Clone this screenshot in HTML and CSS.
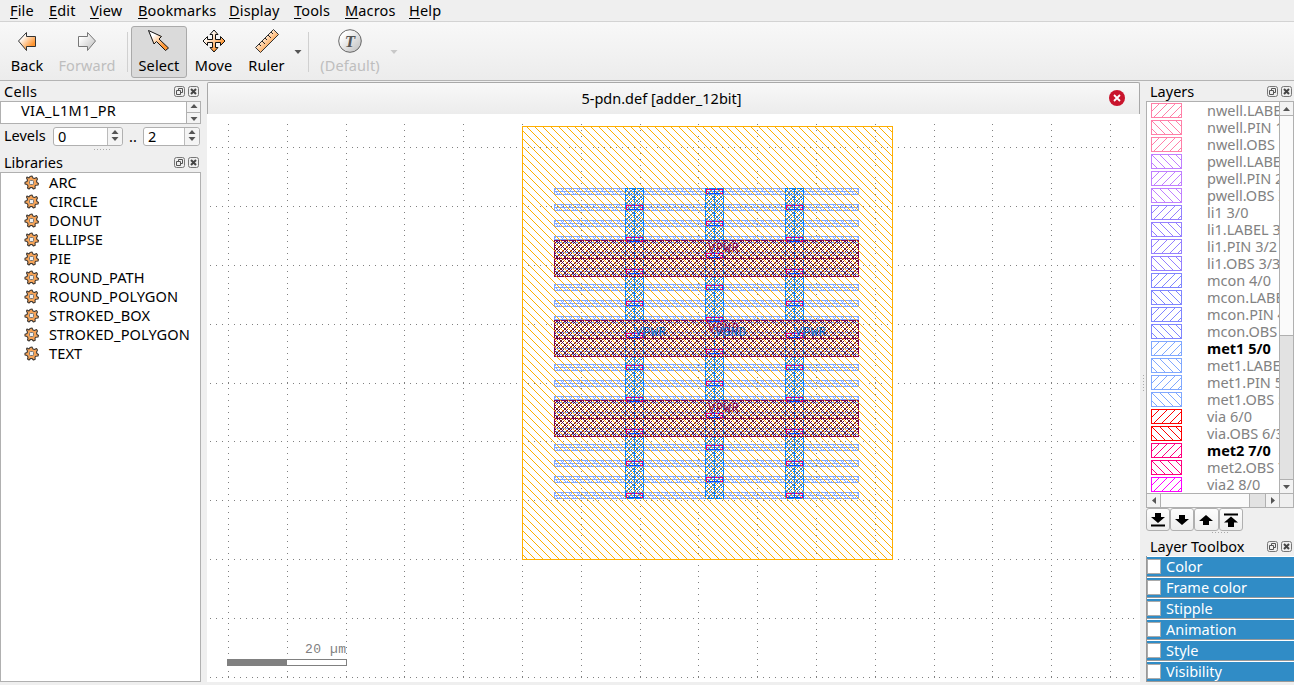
FILE: index.html
```html
<!DOCTYPE html>
<html lang="en">
<head>
<meta charset="utf-8">
<title>5-pdn.def [adder_12bit]</title>
<link rel="stylesheet" href="styles.css">
</head>
<body>
<svg class="defs" width="0" height="0">
  <defs>
    <linearGradient id="orange" x1="0" y1="0" x2="1" y2="1"><stop offset=".25" stop-color="#fff"/><stop offset=".75" stop-color="#ff9632"/></linearGradient>
    <linearGradient id="grey" x1="0" y1="0" x2="1" y2="1"><stop offset=".2" stop-color="#fff"/><stop offset="1" stop-color="#bbb"/></linearGradient>
    <symbol id="float" viewBox="0 0 11 11"><rect x=".5" y=".5" width="10" height="10" rx="2" fill="#eee" stroke="#777"/><path d="M4.5 4V2.5h4v4H7M2.500 4.500h4v4h-4z" fill="none" stroke="#555"/></symbol>
    <symbol id="close" viewBox="0 0 11 11"><rect x=".5" y=".5" width="10" height="10" rx="2" fill="#eee" stroke="#777"/><path d="M3 3l5 5M8 3L3 8" stroke="#444" stroke-width="2"/></symbol>
    <symbol id="gear" viewBox="0 0 15 15"><path d="M6 1.500l2-.5 1 2 1.500.5 2-1 1 1.500-1 2 .5 1.500 1.500 1-.5 1.500-2 .2-1 1 .2 2-1.700.8-1.500-1.500-1.500 0-1.500 1.500-1.500-1 .5-2-1-1.500-2-.5 0-1.800 2-.7.5-1.500-1-2L3 2l2 1z" fill="#f6a458" stroke="#403a35" stroke-width="1.100" stroke-linejoin="round"/><rect x="5.500" y="5.500" width="4" height="4" rx="1" fill="#eee" stroke="#777"/></symbol>
    <symbol id="up" viewBox="0 0 7 4"><path d="M0 4L3.500 0 7 4z"/></symbol>
    <symbol id="down" viewBox="0 0 7 4"><path d="M0 0h7L3.500 4z"/></symbol>
  </defs>
</svg>
<div class="app">
  <nav class="menubar">
    <span class="m-file"><u>F</u>ile</span><span class="m-edit"><u>E</u>dit</span><span class="m-view"><u>V</u>iew</span><span class="m-book"><u>B</u>ookmarks</span><span class="m-disp"><u>D</u>isplay</span><span class="m-tools"><u>T</u>ools</span><span class="m-macros"><u>M</u>acros</span><span class="m-help"><u>H</u>elp</span>
  </nav>
  <div class="toolbar">
    <button class="tool t-back"><svg width="24" height="24"><path d="M3.500 12L11.500 3.500v4h9v10h-9v4z" fill="url(#orange)" stroke="#333"/></svg><span>Back</span></button>
    <button class="tool t-forward off"><svg width="24" height="24"><path d="M20.500 12L12.500 3.500v4h-9v10h9v4z" fill="url(#grey)" stroke="#777"/></svg><span>Forward</span></button>
    <i class="sep s1"></i>
    <button class="tool t-select on"><svg width="24" height="24"><path d="M1.500 1.500L14.500 7.500 12 10 21.500 19 18.500 21.500 9.500 12.500 7 15z" fill="url(#orange)" stroke="#111"/></svg><span>Select</span></button>
    <button class="tool t-move"><svg width="24" height="24"><path d="M12 1L16 5.500H13.500V10.500H18.500V7.500L23 12 18.500 16.500V13.500H13.500V18.500H16L12 23 8 18.500H10.500V13.500H5.500V16.500L1 12 5.500 7.500V10.500H10.500V5.500H8z" fill="url(#orange)" stroke="#111"/></svg><span>Move</span></button>
    <button class="tool t-ruler"><svg width="24" height="24"><path d="M.5 18.500L18.500.5 23.500 5.500 5.500 23.500z" fill="url(#orange)" stroke="#333"/><path d="M4 15l2 2M7 12l3 3M10 9l2 2M13 6l3 3M16 3l2 2" stroke="#222"/></svg><span>Ruler</span></button>
    <svg class="drop" width="8" height="4"><use href="#down" fill="#555"/></svg>
    <i class="sep s2"></i>
    <button class="tool t-default off"><svg width="24" height="24"><circle cx="12" cy="12" r="11.300" fill="url(#grey)" stroke="#666"/><text x="12" y="17.500" text-anchor="middle" class="tee">T</text></svg><span>(Default)</span></button>
    <svg class="drop d2" width="8" height="4"><use href="#down" fill="#c8c8c8"/></svg>
  </div>
  <main class="work">
    <aside class="left">
      <div class="head"><b class="n-cells">Cells</b><svg><use href="#float"/></svg><svg><use href="#close"/></svg></div>
      <div class="cells"><span>VIA_L1M1_PR</span><div class="mini"><svg><use href="#up"/></svg><svg><use href="#down"/></svg></div></div>
      <div class="levels"><span class="lv">Levels</span>
        <div class="spin w1"><span>0</span><div><svg><use href="#up"/></svg><svg><use href="#down"/></svg></div></div>
        <span class="dots">..</span>
        <div class="spin w2"><span>2</span><div><svg><use href="#up"/></svg><svg><use href="#down"/></svg></div></div>
      </div>
      <div class="grip"></div>
      <div class="head lib"><b class="n-lib">Libraries</b><svg><use href="#float"/></svg><svg><use href="#close"/></svg></div>
      <ul class="libs" id="libs"></ul>
    </aside>
    <section class="center">
      <header class="tab"><span>5-pdn.def [adder_12bit]</span><svg width="16" height="16"><circle cx="8" cy="8" r="8" fill="#c9142c"/><path d="M5 5l6 6M11 5l-6 6" stroke="#fff" stroke-width="1.800"/></svg></header>
      <svg class="view" id="view" width="933" height="568" viewBox="207 114 933 568" shape-rendering="crispEdges"></svg>
    </section>
    <div class="handle"><i></i></div>
    <aside class="right">
      <div class="head"><b class="n-layers">Layers</b><svg><use href="#float"/></svg><svg><use href="#close"/></svg></div>
      <div class="layerbox">
        <div class="rows" id="rows"></div>
        <div class="vbar"><div class="sb"><svg width="7" height="4"><use href="#up"/></svg></div><div class="thumb"></div><div class="track"></div><div class="sb last"><svg width="7" height="4"><use href="#down"/></svg></div></div>
        <div class="hbar"><div class="hb"><svg width="4" height="7"><path d="M4 0v7L0 3.500z"/></svg></div><div class="hthumb"></div><div class="htrack"></div><div class="hb"><svg width="4" height="7"><path d="M0 0v7l4-3.500z"/></svg></div></div>
        <div class="corner"></div>
      </div>
      <div class="arrows">
        <button><svg width="14" height="14"><path d="M4 0h6v4h4L7 10 0 4h4zM0 11.500h14v2H0z"/></svg></button>
        <button><svg width="14" height="14"><path d="M4 2h6v4h4L7 12 0 6h4z"/></svg></button>
        <button><svg width="14" height="14"><path d="M7 2l7 6h-4v4H4V8H0z"/></svg></button>
        <button><svg width="14" height="14"><path d="M0 .5h14v2H0zM7 3.500l7 6h-4V14H4V9.500H0z"/></svg></button>
      </div>
      <div class="grip g2"></div>
      <div class="head tb"><b class="n-tb">Layer Toolbox</b><svg><use href="#float"/></svg><svg><use href="#close"/></svg></div>
      <div class="boxes"><label><i></i>Color</label><label><i></i>Frame color</label><label><i></i>Stipple</label><label><i></i>Animation</label><label><i></i>Style</label><label><i></i>Visibility</label></div>
    </aside>
  </main>
</div>
<script src="app.js"></script>
</body>
</html>
```

FILE: styles.css
```css
* { box-sizing: border-box; }
body { margin: 0; width: 1294px; height: 685px; overflow: hidden; background: #efefef; color: #000; font: 14.5px/20px "Noto Sans", "Open Sans", sans-serif; }
.defs { position: absolute; }
button { font: inherit; color: inherit; padding: 0; background: none; border: 0; }
.app { display: flex; flex-direction: column; height: 685px; }
.menubar { display: flex; height: 22px; padding-left: 10px; border-bottom: 1px solid #d3d3d3; white-space: nowrap; line-height: 21px; letter-spacing: .15px; }
.menubar span { flex: none; }
.menubar u { text-decoration-thickness: 1px; text-underline-offset: 2px; }
.m-file { width: 39px; } .m-edit { width: 41px; } .m-view { width: 48px; } .m-book { width: 91px; }
.m-disp { width: 65px; } .m-tools { width: 51px; } .m-macros { width: 64px; }
.toolbar { display: flex; height: 59px; background: linear-gradient(#f8f8f8, #ececec); border-bottom: 1px solid #b4b4b4; }
.tool { display: flex; flex-direction: column; align-items: center; flex: none; height: 52px; margin-top: 4px; padding-top: 2px; border: 1px solid transparent; border-radius: 3px; white-space: nowrap; }
.tool svg { flex: none; }
.tool span { line-height: 20px; margin-top: 2px; letter-spacing: .1px; }
.t-back { width: 54px; } .t-forward { width: 66px; } .t-select { width: 56px; } .t-move { width: 53px; } .t-ruler { width: 53px; } .t-default { width: 70px; }
.tool.on { background: #dadada; border-color: #aaa; }
.off { color: #bebebe; }
.tee { font: italic bold 17px "Liberation Serif", serif; fill: #555; }
.sep { width: 1px; height: 40px; background: #d0d0d0; }
.s1 { margin: 10px 3px 0 7px; } .s2 { margin: 10px 6px 0 6px; }
.drop { margin: 28px 0 0 1px; } .d2 { margin-left: 5px; }
.work { display: flex; flex: 1; min-height: 0; }
.left { width: 201px; margin-right: 6px; display: flex; flex-direction: column; }
.head { display: flex; align-items: center; height: 20px; padding-left: 4px; gap: 3px; flex: none; }
.head b { font-weight: normal; flex: 1; white-space: nowrap; }
.head svg { width: 11px; height: 11px; flex: none; }
.n-cells { letter-spacing: .3px; }
.left .head { padding-right: 2px; }
.cells { display: flex; height: 23px; border: 1px solid #b0b0b0; background: #fff; flex: none; }
.cells > span { flex: 1; padding-left: 20px; line-height: 17px; letter-spacing: .4px; }
.mini { width: 14px; border-left: 1px solid #b0b0b0; display: flex; flex-direction: column; align-items: center; justify-content: space-between; padding: 2px 0; background: linear-gradient(#f3f3f3 10px, #b0b0b0 10px 11px, #f3f3f3 11px); }
.mini svg, .spin svg { width: 8px; height: 4px; fill: #555; }
.levels { display: flex; height: 24px; align-items: center; padding-left: 4px; flex: none; }
.lv { width: 49px; line-height: 18px; padding-bottom: 2px; } .dots { width: 20px; padding-left: 6px; }
.spin { display: flex; height: 19px; border: 1px solid #b0b0b0; border-radius: 3px; background: #fff; }
.spin span { flex: 1; padding-left: 4px; line-height: 17px; }
.spin > div { width: 15px; border-left: 1px solid #bbb; background: #f4f4f4; border-radius: 0 3px 3px 0; display: flex; flex-direction: column; align-items: center; justify-content: center; gap: 3px; padding-bottom: 1px; }
.w1 { width: 70px; } .w2 { width: 57px; }
.grip { height: 1px; width: 17px; margin: 1px 0 2px 94px; background: repeating-linear-gradient(90deg, #aaa 0 1px, transparent 1px 3px); flex: none; }
.lib { height: 20px; }
.libs { flex: 1; margin: 0 0 3px; padding: 0; border: 1px solid #b0b0b0; background: #fff; list-style: none; font-size: 14.6px; letter-spacing: .1px; }
.libs li { display: flex; height: 19px; align-items: center; padding-left: 23px; }
.libs span { line-height: 19px; padding-bottom: 1px; }
.libs svg { width: 15px; height: 15px; margin: 0 10px 1px 0; }
.center { width: 933px; display: flex; flex-direction: column; }
.tab { height: 32px; margin: 1px 0 0; display: flex; align-items: center; background: linear-gradient(#f8f8f8, #ececec); border: solid #a8a8a8; border-width: 1px 1px 0; border-radius: 2px 2px 0 0; padding: 0 14px 2px 0; }
.tab span { flex: 1; text-align: center; padding-left: 6px; }
.view { display: block; background: #fff; }
.handle { width: 6px; display: flex; align-items: center; justify-content: center; }
.handle i { width: 1px; height: 17px; background: repeating-linear-gradient(#aaa 0 1px, transparent 1px 3px); }
.right { width: 148px; display: flex; flex-direction: column; }
.right .head { padding: 0 2px 0 4px; height: 20px; }
.n-layers { line-height: 18px; padding-bottom: 1px; }
.layerbox { display: grid; grid-template: 391px 14px / 132px 14px; border: 1px solid #b0b0b0; height: 407px; overflow: hidden; background: #fff; width: 148px; flex: none; }
.rows { overflow: hidden; height: 391px; }
.row { display: flex; height: 17px; padding: 1px 0 0 4px; white-space: nowrap; color: #828282; }
.row svg { flex: none; margin-right: 25px; }
.row span { line-height: 14px; height: 16px; }
.row.vis span { color: #000; font-weight: bold; }
.vbar { display: flex; flex-direction: column; border-left: 1px solid #b0b0b0; }
.sb { height: 14px; display: grid; place-items: center; border-bottom: 1px solid #b0b0b0; background: #f3f3f3; flex: none; fill: #555; }
.sb.last { border-top: 1px solid #b0b0b0; border-bottom: 0; }
.thumb { height: 220px; background: #fafafa; border-bottom: 1px solid #b0b0b0; flex: none; }
.track { flex: 1; background: #e2e2e2; }
.hbar { display: flex; border-top: 1px solid #b0b0b0; }
.hb { width: 13px; display: grid; place-items: center; background: #f3f3f3; fill: #555; }
.hthumb { width: 90px; background: #fafafa; border: solid #b0b0b0; border-width: 0 1px; }
.htrack { flex: 1; background: #e2e2e2; border-right: 1px solid #b0b0b0; }
.corner { background: #efefef; border: solid #b0b0b0; border-width: 1px 0 0 1px; }
.arrows { display: flex; height: 23px; }
.arrows button { width: 24.2px; height: 23px; display: grid; place-items: center; border: 1px solid #b0b0b0; border-radius: 3px; background: linear-gradient(#fdfdfd, #eee); }
.g2 { margin: 1px 0 3px 66px; }
.right .tb { height: 20px; }
.boxes { display: flex; flex-direction: column; }
.boxes label { display: flex; height: 21px; align-items: center; background: #308cc6; color: #fff; border: solid #999; border-width: 0 0 1px 1px; box-shadow: inset 0 1px #fff; }
.boxes i { width: 14px; height: 15px; background: #fff; border: 1px solid #aaa; margin-right: 5px; }
```

FILE: app.js
```javascript
document.getElementById("libs").innerHTML = ["ARC", "CIRCLE", "DONUT", "ELLIPSE", "PIE", "ROUND_PATH", "ROUND_POLYGON", "STROKED_BOX", "STROKED_POLYGON", "TEXT"]
  .map(n => `<li><svg><use href="#gear"/></svg><span>${n}</span></li>`).join("");

const layers = [
  ["nwell.LABEL 1/1", "#ff80a8"], ["nwell.PIN 1/2", "#ff80a8"], ["nwell.OBS 1/3", "#ff80a8"],
  ["pwell.LABEL 2/1", "#c080ff"], ["pwell.PIN 2/2", "#c080ff"], ["pwell.OBS 2/3", "#c080ff"],
  ["li1 3/0", "#9580ff"], ["li1.LABEL 3/1", "#9580ff"], ["li1.PIN 3/2", "#9580ff"], ["li1.OBS 3/3", "#9580ff"],
  ["mcon 4/0", "#8086ff"], ["mcon.LABEL 4/1", "#8086ff"], ["mcon.PIN 4/2", "#8086ff"], ["mcon.OBS 4/3", "#8086ff"],
  ["met1 5/0", "#80a8ff", 1], ["met1.LABEL 5/1", "#80a8ff"], ["met1.PIN 5/2", "#80a8ff"], ["met1.OBS 5/3", "#80a8ff"],
  ["via 6/0", "#ff0000"], ["via.OBS 6/3", "#ff0000"],
  ["met2 7/0", "#ff0080", 1], ["met2.OBS 7/3", "#ff0080"], ["via2 8/0", "#ff00ff"]
];
function hatch(back) {
  let d = "";
  for (let y = 1; y < 14; y++)
    for (let x = 1; x < 30; x++)
      if (((back ? x - y : x + y) + 16) % 8 === 0) d += `M${x} ${y}h1v1h-1z`;
  return d;
}
document.getElementById("rows").innerHTML = layers.map(([n, c, v], i) =>
  `<div class="row${v ? " vis" : ""}"><svg width="31" height="15" shape-rendering="crispEdges"><rect x=".5" y=".5" width="30" height="14" fill="#fff" stroke="${c}"/><path d="${hatch(i % 2)}" fill="${c}"/></svg><span>${n}</span></div>`).join("");

const box = (x, y, w, h, stroke, fill = "none") =>
  `<rect x="${x + .5}" y="${y + .5}" width="${w}" height="${h}" fill="${fill}" stroke="${stroke}"/>`;
function pattern(id, size, color, hit) {
  let d = "";
  for (let y = 0; y < size; y++)
    for (let x = 0; x < size; x++) if (hit(x, y)) d += `M${x} ${y}h1v1h-1z`;
  return `<pattern id="${id}" width="${size}" height="${size}" patternUnits="userSpaceOnUse"><path d="${d}" fill="${color}"/></pattern>`;
}
let out = "<defs>" +
  pattern("die", 8, "#ffae00", (x, y) => x === y) +
  pattern("rail", 8, "#80a8ff", (x, y) => (x + y) % 8 === 0 || (x - y + 8) % 4 === 0) +
  pattern("strap", 8, "#0080ff", (x, y) => (x + y) % 8 === 0 || (x + y) % 8 === 5) +
  pattern("strapBack", 8, "#9a7a40", (x, y) => (x - y + 8) % 8 === 4) +
  pattern("band", 8, "#700038", (x, y) => (x + y) % 8 === 0 || (x + y) % 8 === 5) +
  pattern("bandBack", 8, "#5a3418", (x, y) => (x - y + 8) % 8 === 4) + "</defs>";

// background grid, ten dots per division
let dots = "";
const pitch = 58.79, sub = pitch / 10;
for (let k = 0; k < 16; k++)
  for (let j = -4; j < 96; j++) dots += `M${Math.round(228.1 + k * pitch)} ${Math.round(147.3 + j * sub)}h1v1h-1z`;
for (let k = 0; k < 10; k++)
  for (let j = -3; j < 155; j++) dots += `M${Math.round(228.1 + j * sub)} ${Math.round(147.4 + k * pitch)}h1v1h-1z`;
out += `<path d="${dots}" fill="#808080"/>`;

for (let y = 188; y <= 492; y += 16)
  out += box(554, y, 304, 6, "#80a8ff", "url(#rail)") + `<path d="M554 ${y + 3}h304v1h-304z" fill="#80a8ff"/>`;
for (const x of [625, 705, 785])
  out += box(x, 188, 18, 310, "none", "url(#strapBack)") + box(x, 188, 18, 310, "#0080ff", "url(#strap)") + `<path d="M${x + 9} 188h1v310h-1z" fill="#0080ff"/>`;
for (const y of [240, 320, 400])
  out += box(554, y, 304, 36, "none", "url(#bandBack)") + box(554, y, 304, 36, "#800057", "url(#band)") + `<path d="M554 ${y + 18}h304v1h-304z" fill="#800057"/>`;
out += `<rect x="522" y="126" width="371" height="433" fill="url(#die)"/>` + box(522, 126, 370, 433, "#ffae00");
[625, 705, 785].forEach((x, i) => {
  for (let y = i === 1 ? 189 : 205; y < 498; y += 32)
    out += box(x + 1, y, 16, 4, "#0050ff") + `<rect x="${x + 1.5}" y="${y + .5}" width="16" height="4" fill="none" stroke="#f00080" stroke-dasharray="5 1"/><path d="M${x + 4} ${y + 4}h10v1h-10zM${x + 9} ${y}h1v5h-1z" fill="#0050ff"/>`;
});
const label = (x, y, t, c) => `<text x="${x}" y="${y}" textLength="31" fill="${c}" font-family="Liberation Mono, monospace" font-size="12">${t}</text>`;
out += label(708, 252, "VPWR", "#800057") + label(708, 332, "VGND", "#800057") + label(708, 412, "VPWR", "#800057");
out += label(635, 336, "VPWR", "#0060d0") + label(715, 336, "VGND", "#0060d0") + label(795, 336, "VPWR", "#0060d0");
out += `<rect x="227" y="659" width="60" height="7" fill="#808080"/>` + box(227, 659, 119, 6, "#808080") +
  `<text x="305" y="653" textLength="41" font-family="Liberation Mono, monospace" font-size="13" fill="#808080">20 µm</text>`;
document.getElementById("view").innerHTML = out;
```
